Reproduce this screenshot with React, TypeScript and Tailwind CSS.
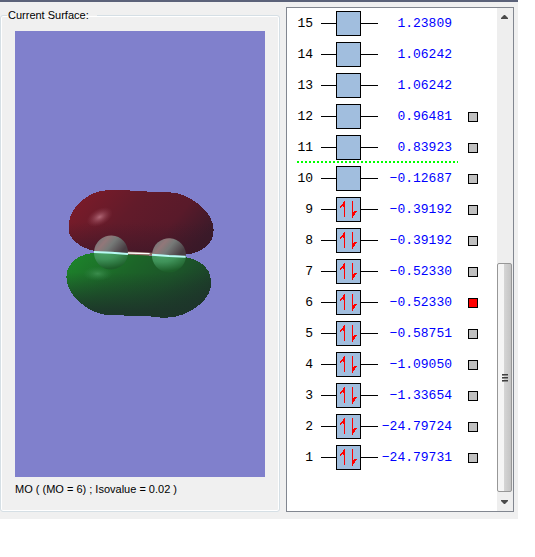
import React from 'react';

interface Orbital {
  id: number;
  energy: string;
  occupied: boolean;
  selectable: boolean;
}

const orbitals: Orbital[] = [
  { id: 15, energy: '1.23809', occupied: false, selectable: false },
  { id: 14, energy: '1.06242', occupied: false, selectable: false },
  { id: 13, energy: '1.06242', occupied: false, selectable: false },
  { id: 12, energy: '0.96481', occupied: false, selectable: true },
  { id: 11, energy: '0.83923', occupied: false, selectable: true },
  { id: 10, energy: '−0.12687', occupied: false, selectable: true },
  { id: 9, energy: '−0.39192', occupied: true, selectable: true },
  { id: 8, energy: '−0.39192', occupied: true, selectable: true },
  { id: 7, energy: '−0.52330', occupied: true, selectable: true },
  { id: 6, energy: '−0.52330', occupied: true, selectable: true },
  { id: 5, energy: '−0.58751', occupied: true, selectable: true },
  { id: 4, energy: '−1.09050', occupied: true, selectable: true },
  { id: 3, energy: '−1.33654', occupied: true, selectable: true },
  { id: 2, energy: '−24.79724', occupied: true, selectable: true },
  { id: 1, energy: '−24.79731', occupied: true, selectable: true },
];

const RED_LOBE =
  'M42 132 C42 88 92 34 160 30 L222 30 L226 33 L275 34 L278 36 L345 37 C402 40 476 92 476 150 C476 192 440 220 392 223 L290 221 L218 217 L118 213 C76 204 42 176 42 152 Z';
const GREEN_LOBE =
  'M34 290 C34 252 68 220 118 219 L218 222 L290 227 L392 232 C432 237 467 266 467 298 L467 322 C462 364 398 412 335 413 L290 412 L288 409 L245 409 L243 407 L160 406 C98 400 34 346 34 290 Z';

function SurfaceView() {
  return (
    <svg
      role="img"
      aria-label="Molecular orbital surface"
      viewBox="0 0 250 446"
      className="block h-[446px] w-full bg-[#8080cc]"
    >
      <defs>
        <linearGradient id="red" x1="0" y1="0.2" x2="1" y2="0.6">
          <stop offset="0" stopColor="#7c1b29" />
          <stop offset="0.4" stopColor="#621b2a" />
          <stop offset="0.72" stopColor="#591a2a" />
          <stop offset="1" stopColor="#3a1a29" />
        </linearGradient>
        <linearGradient id="redShade" x1="0" y1="0" x2="0" y2="1">
          <stop offset="0.5" stopColor="#3a1727" stopOpacity="0" />
          <stop offset="1" stopColor="#3a1727" stopOpacity="0.65" />
        </linearGradient>
        <linearGradient id="green" x1="0" y1="0.1" x2="1" y2="0.6">
          <stop offset="0" stopColor="#1d852b" />
          <stop offset="0.4" stopColor="#1c6528" />
          <stop offset="0.7" stopColor="#1c5429" />
          <stop offset="1" stopColor="#1d382a" />
        </linearGradient>
        <linearGradient id="greenShade" x1="0" y1="0" x2="0" y2="1">
          <stop offset="0.3" stopColor="#1d342a" stopOpacity="0" />
          <stop offset="0.9" stopColor="#1d342a" stopOpacity="0.9" />
        </linearGradient>
        <radialGradient id="shine">
          <stop offset="0" stopColor="#b8707f" stopOpacity="0.9" />
          <stop offset="1" stopColor="#8a3a4a" stopOpacity="0" />
        </radialGradient>
        <radialGradient id="greenShine">
          <stop offset="0" stopColor="#409252" stopOpacity="0.85" />
          <stop offset="1" stopColor="#2c7c40" stopOpacity="0" />
        </radialGradient>
        <linearGradient id="atomTop" x1="0.1" y1="0.1" x2="1" y2="0.5">
          <stop offset="0" stopColor="#6e7476" />
          <stop offset="0.3" stopColor="#927779" />
          <stop offset="0.55" stopColor="#757977" />
          <stop offset="1" stopColor="#493d43" />
        </linearGradient>
        <radialGradient id="atomBottom" cx="0.3" cy="0" r="0.95">
          <stop offset="0" stopColor="#4da56a" />
          <stop offset="0.45" stopColor="#3f9259" />
          <stop offset="1" stopColor="#1d5e2a" />
        </radialGradient>
      </defs>
      <g transform="translate(40 149) scale(0.3333)">
        <path d={RED_LOBE} fill="url(#red)" shapeRendering="crispEdges" />
        <path d={RED_LOBE} fill="url(#redShade)" shapeRendering="crispEdges" />
        <path d={GREEN_LOBE} fill="url(#green)" shapeRendering="crispEdges" />
        <path d={GREEN_LOBE} fill="url(#greenShade)" shapeRendering="crispEdges" />
        <ellipse cx="134" cy="111" rx="42" ry="25" fill="url(#shine)" transform="rotate(-28 134 111)" />
        <ellipse cx="128" cy="281" rx="44" ry="22" fill="url(#greenShine)" />
        <path d="M117 215 A51 51 0 0 1 219 220 Z" fill="url(#atomTop)" />
        <path d="M117 215 A51 51 0 0 0 219 220 Z" fill="url(#atomBottom)" />
        <path d="M291 223 A51 51 0 0 1 393 229 Z" fill="url(#atomTop)" />
        <path d="M291 223 A51 51 0 0 0 393 229 Z" fill="url(#atomBottom)" />
        <path d="M218 219 L292 223" stroke="#8f6a62" strokeWidth="9" />
        <path d="M219 219 L284 221" stroke="#fff" strokeWidth="4" />
        <path d="M117 216 L170 218 L219 222" fill="none" stroke="#b9faf4" strokeWidth="6" />
        <path d="M291 224 L342 228 L392 230" fill="none" stroke="#b9faf4" strokeWidth="6" />
      </g>
    </svg>
  );
}

function OrbitalBox({ occupied }: { occupied: boolean }) {
  return (
    <div className="flex items-center">
      <span className="h-px w-[15px] bg-black" />
      <span className="size-[25px] border border-black bg-[#a1bede]">
        {occupied && (
          <svg viewBox="0 0 23 23" className="block size-full" aria-label="electron pair" shapeRendering="crispEdges">
            <path d="M7 3H8V19H7V9H6V8H5V9H4V10H3V8H4V7H5V6H6V4H7Z" fill="#f00" />
            <path d="M15 3H16V14H17V13H20V14H19V15H18V17H17V18H16V20H15Z" fill="#f00" />
          </svg>
        )}
      </span>
      <span className="h-px flex-1 bg-black" />
    </div>
  );
}

function ScrollBar() {
  return (
    <div className="flex w-4 flex-col bg-[#eeeeee] pr-px">
      <button type="button" aria-label="Scroll up" className="flex h-[17px] items-center justify-center">
        <svg viewBox="0 0 7 4" className="h-1 w-[7px]">
          <path d="M3 0H4L7 3V4H0V3Z" fill="#4a4a4a" />
        </svg>
      </button>
      <div className="flex flex-1 flex-col justify-end">
        <div className="flex h-[229px] flex-col items-center justify-center gap-px rounded-[2px] border border-[#979797] bg-linear-to-r from-[#f5f5f5] from-45% via-[#d4d4d4] via-50% to-[#c4c4c4]">
          {[0, 1, 2].map((grip) => (
            <span key={grip} className="h-0.5 w-1.5 border-t border-[#404040] bg-[#8a8a8a]" />
          ))}
        </div>
      </div>
      <button type="button" aria-label="Scroll down" className="flex h-[19px] items-center justify-center">
        <svg viewBox="0 0 7 4" className="h-1 w-[7px]">
          <path d="M0 0H7V1L4 4H3L0 1Z" fill="#4a4a4a" />
        </svg>
      </button>
    </div>
  );
}

function App() {
  const [selected, setSelected] = React.useState<number[]>([6]);

  const toggle = (id: number) => {
    setSelected((prev) => (prev.includes(id) ? prev.filter((n) => n !== id) : [...prev, id]));
  };

  return (
    <div className="bg-white pr-[17px] font-['Liberation_Sans',Arial,sans-serif] text-[11px] text-black">
      <main className="flex gap-1.5 border-t-2 border-[#5b6279] bg-[#f0f0f0] pt-[5px] pr-[4px] pb-[7px]">
        <fieldset className="min-w-0 flex-1 rounded-[3px] border border-[#d5dfe5] px-3.5 shadow-[inset_0_0_0_1px_white]">
          <legend className="-ml-2 h-4 pr-2 pl-px leading-4">Current Surface:</legend>
          <div className="pt-2">
            <SurfaceView />
            <p className="pt-1 leading-4">MO ( (MO = 6) ; Isovalue = 0.02 )</p>
          </div>
        </fieldset>

        <section className="flex w-[228px] border border-[#828790] bg-white" aria-label="Orbital energies">
          <div className="flex-1 pb-[38px] pl-2.5">
            <table className="w-[181px] table-fixed border-collapse font-['Liberation_Mono','Courier_New',monospace] text-[13px] leading-4">
              <colgroup>
                <col className="w-6" />
                <col className="w-[57px]" />
                <col className="w-[90px]" />
                <col className="w-2.5" />
              </colgroup>
              <tbody>
                {orbitals.map(({ id, energy, occupied, selectable }) => (
                  <tr
                    key={id}
                    className={
                      id === 11
                        ? 'h-[31px] bg-[repeating-linear-gradient(90deg,#00ff00_0_2px,transparent_2px_4px)] bg-[length:161px_2px] bg-[position:0_29px] bg-no-repeat'
                        : 'h-[31px]'
                    }
                  >
                    <th scope="row" className="p-0 pr-2 text-right font-normal">
                      <label htmlFor={selectable ? `mo-${id}` : undefined}>{id}</label>
                    </th>
                    <td className="p-0">
                      <OrbitalBox occupied={occupied} />
                    </td>
                    <td className="p-0 pr-4 text-right text-[#0000ff]">{energy}</td>
                    <td className="p-0">
                      {selectable && (
                        <input
                          id={`mo-${id}`}
                          type="checkbox"
                          checked={selected.includes(id)}
                          onChange={() => toggle(id)}
                          className="block size-2.5 appearance-none border border-black bg-[#c0c0c0] checked:bg-[#ff0000]"
                        />
                      )}
                    </td>
                  </tr>
                ))}
              </tbody>
            </table>
          </div>
          <ScrollBar />
        </section>
      </main>
    </div>
  );
}

export default App;
